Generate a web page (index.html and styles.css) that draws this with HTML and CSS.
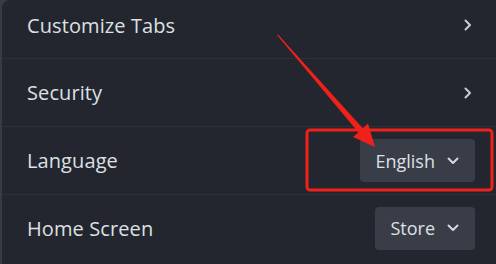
FILE: index.html
```html
<!DOCTYPE html>
<html>
<head>
<meta charset="utf-8">
<link rel="stylesheet" href="styles.css">
</head>
<body>
<div class="panel">
  <div class="row first">
    <span class="label">Customize Tabs</span>
    <svg class="chev-right" width="8" height="12" viewBox="0 0 8 12"><path d="M1.5 1.5 L6 6 L1.5 10.5" fill="none" stroke="#c9ccd1" stroke-width="2" stroke-linecap="round" stroke-linejoin="round"/></svg>
  </div>
  <div class="row">
    <span class="label">Security</span>
    <svg class="chev-right" width="8" height="12" viewBox="0 0 8 12"><path d="M1.5 1.5 L6 6 L1.5 10.5" fill="none" stroke="#c9ccd1" stroke-width="2" stroke-linecap="round" stroke-linejoin="round"/></svg>
  </div>
  <div class="row">
    <span class="label">Language</span>
    <div class="select wide"><span>English</span>
      <svg width="12" height="8" viewBox="0 0 12 8"><path d="M1.5 1.5 L6 6 L10.5 1.5" fill="none" stroke="#d4d7db" stroke-width="2" stroke-linecap="round" stroke-linejoin="round"/></svg>
    </div>
  </div>
  <div class="row last">
    <span class="label">Home Screen</span>
    <div class="select"><span>Store</span>
      <svg width="12" height="8" viewBox="0 0 12 8"><path d="M1.5 1.5 L6 6 L10.5 1.5" fill="none" stroke="#d4d7db" stroke-width="2" stroke-linecap="round" stroke-linejoin="round"/></svg>
    </div>
  </div>
</div>
<svg class="annot" width="496" height="264" viewBox="0 0 496 264">
  <rect x="307" y="130" width="185" height="60" rx="3" fill="none" stroke="#f0201a" stroke-width="3"/>
  <polygon points="277,35 278,34.4 363,128.5 358.5,132.5" fill="#f0201a"/>
  <polygon points="375,147 353,137 368,123.5" fill="#f0201a"/>
</svg>
</body>
</html>
```
FILE: styles.css
```css
html, body {
  margin: 0;
  padding: 0;
  background: #383b43;
  width: 496px;
  height: 264px;
  overflow: hidden;
  font-family: "Open Sans", "Noto Sans", sans-serif;
}
.panel {
  margin-left: 2px;
  height: 264px;
  background: #23262e;
  border-top-left-radius: 8px;
  display: flex;
  flex-direction: column;
}
.row {
  display: flex;
  align-items: center;
  justify-content: space-between;
  height: 67px;
  padding: 0 21px 0 25px;
  border-bottom: 1px solid #2e313a;
  box-sizing: content-box;
}
.row.first {
  height: 50px;
  padding-bottom: 8px;
}
.row.last {
  border-bottom: none;
  flex: 1;
  padding-bottom: 3px;
}
.label {
  color: #dde0e3;
  font-size: 20px;
  letter-spacing: 0.1px;
}
.chev-right {
  margin-right: 3px;
}
.select {
  display: flex;
  align-items: center;
  gap: 12px;
  height: 43px;
  padding: 0 16px 0 15px;
  background: #393d48;
  border-radius: 4px;
  color: #dde0e3;
  font-size: 18px;
  box-sizing: border-box;
}
.annot {
  position: absolute;
  left: 0;
  top: 0;
  pointer-events: none;
}
```
